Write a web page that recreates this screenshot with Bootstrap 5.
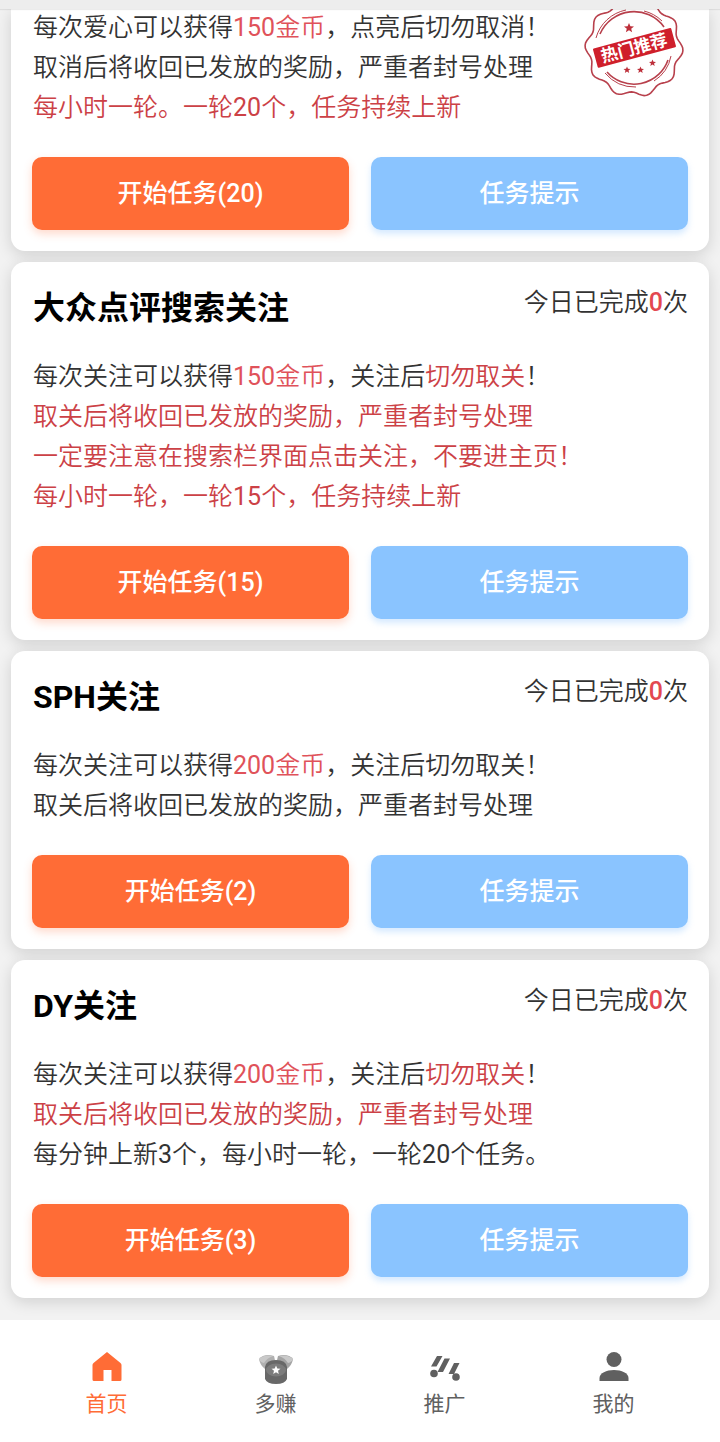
<!DOCTYPE html>
<html lang="zh-CN">
<head>
    <meta charset="UTF-8">
    <meta name="viewport" content="width=device-width, initial-scale=1">
    <title>任务列表</title>
    <link href="https://cdn.jsdelivr.net/npm/bootstrap@5.3.3/dist/css/bootstrap.min.css" rel="stylesheet">
    <style>
        body {
            font-family: Roboto, "Noto Sans CJK SC", sans-serif;
            font-size: 25px;
            line-height: 40px;
            font-weight: 350;
            color: #333;
            background: #f2f2f2;
            padding: 8px 11px 144px;
        }
        .top-strip {
            height: 9px;
            background: #ededed;
            box-shadow: 0 1px 1px rgba(0, 0, 0, .08);
        }
        .task-list { gap: 11px; }
        .task-card {
            border: 0;
            border-radius: 14px;
            padding: 21px;
            box-shadow: 0 4px 16px rgba(0, 0, 0, .14);
        }
        .task-card-cut {
            border-top-left-radius: 0;
            border-top-right-radius: 0;
            padding-top: 0;
        }
        .task-title {
            font-size: 32px;
            line-height: 50px;
            font-weight: 700;
            color: #000;
            margin-bottom: 24px;
            padding-left: 1px;
        }
        .task-text {
            margin-bottom: 29px;
            padding-left: 1px;
        }
        .num { font-weight: 400; }
        .coin { color: #e0525a; }
        .warn { color: #cc4146; }
        .done-num { color: #e34850; font-weight: 500; }
        .task-actions { gap: 22px; }
        .btn-task {
            --bs-btn-color: #fff;
            --bs-btn-hover-color: #fff;
            --bs-btn-active-color: #fff;
            flex: 1 1 0;
            border: 0;
            border-radius: 10px;
            padding: 16px 12px;
            font-size: 25px;
            line-height: 41px;
            font-weight: 500;
        }
        .btn-start {
            --bs-btn-bg: #ff6c36;
            --bs-btn-hover-bg: #f2602a;
            --bs-btn-active-bg: #e65a26;
            box-shadow: 0 4px 8px rgba(255, 108, 54, .25);
        }
        .btn-tip {
            --bs-btn-bg: #8ac4ff;
            --bs-btn-hover-bg: #78b8f8;
            --bs-btn-active-bg: #6bacf0;
            box-shadow: 0 4px 6px rgba(138, 196, 255, .35);
        }
        .hot-stamp {
            top: -13px;
            right: 22px;
            width: 106px;
            height: 106px;
        }
        .tab-bar {
            background: #fff;
            padding: 30px 22px 23px;
        }
        .tab-item {
            flex: 1 1 0;
            gap: 7px;
            font-size: 21px;
            line-height: 30px;
            font-weight: 400;
            color: #606060;
            text-decoration: none;
        }
        .tab-item svg { overflow: visible; }
        .tab-item.active { color: #ff6c36; }
    </style>
</head>
<body>
<div class="top-strip fixed-top"></div>

<main class="task-list d-flex flex-column">
    <section class="card task-card task-card-cut">
        <p class="task-text">
            每次爱心可以获得<span class="coin"><span class="num">150</span>金币</span>，点亮后切勿取消！<br>
            取消后将收回已发放的奖励，严重者封号处理<br>
            <span class="warn">每小时一轮。一轮<span class="num">20</span>个，任务持续上新</span>
        </p>
        <div class="task-actions d-flex">
            <button type="button" class="btn btn-task btn-start">开始任务(20)</button>
            <button type="button" class="btn btn-task btn-tip">任务提示</button>
        </div>
        <svg class="hot-stamp position-absolute" viewBox="-53 -53 106 106" role="img" aria-label="热门推荐">
            <g fill="none" stroke="#b8404c">
                <path id="stamp-edge" stroke-width="1.6"/>
                <path d="M-34-14A37 37 0 0 1 30-21M34 12A36 36 0 0 1-27 24" stroke-width="1.6"/>
                <path d="M-38-10A39 39 0 0 1-8-38M10-37A39 39 0 0 1 28-27M37 8A38 38 0 0 1 20 33M2 39A39 39 0 0 1-29 25" stroke-width="1"/>
            </g>
            <g fill="#bd2f3a">
                <path id="star" d="M0-5L1.4-1.7L5-1.5L2.2.7L3.1 4.3L0 2.3L-3.1 4.3L-2.2.7L-5-1.5L-1.4-1.7Z" transform="translate(-5 -20)"/>
                <use href="#star" transform="translate(-3.5 36) scale(.7)"/>
                <use href="#star" transform="translate(10 36) scale(.7)"/>
                <use href="#star" transform="translate(22 29) scale(.7)"/>
            </g>
            <g transform="rotate(-15)">
                <rect x="-40" y="-10" width="81" height="20" rx="1" fill="#cf1f2b"/>
                <text x="0" y="6" text-anchor="middle" font-size="17" font-weight="700" fill="#fff">热门推荐</text>
            </g>
        </svg>
    </section>

    <section class="card task-card">
        <div class="d-flex justify-content-between align-items-start">
            <h2 class="task-title">大众点评搜索关注</h2>
            <span>今日已完成<span class="done-num">0</span>次</span>
        </div>
        <p class="task-text">
            每次关注可以获得<span class="coin"><span class="num">150</span>金币</span>，关注后<span class="warn">切勿取关</span>！<br>
            <span class="warn">取关后将收回已发放的奖励，严重者封号处理<br>
            一定要注意在搜索栏界面点击关注，不要进主页！<br>
            每小时一轮，一轮<span class="num">15</span>个，任务持续上新</span>
        </p>
        <div class="task-actions d-flex">
            <button type="button" class="btn btn-task btn-start">开始任务(15)</button>
            <button type="button" class="btn btn-task btn-tip">任务提示</button>
        </div>
    </section>

    <section class="card task-card">
        <div class="d-flex justify-content-between align-items-start">
            <h2 class="task-title">SPH关注</h2>
            <span>今日已完成<span class="done-num">0</span>次</span>
        </div>
        <p class="task-text">
            每次关注可以获得<span class="coin"><span class="num">200</span>金币</span>，关注后切勿取关！<br>
            取关后将收回已发放的奖励，严重者封号处理
        </p>
        <div class="task-actions d-flex">
            <button type="button" class="btn btn-task btn-start">开始任务(2)</button>
            <button type="button" class="btn btn-task btn-tip">任务提示</button>
        </div>
    </section>

    <section class="card task-card">
        <div class="d-flex justify-content-between align-items-start">
            <h2 class="task-title">DY关注</h2>
            <span>今日已完成<span class="done-num">0</span>次</span>
        </div>
        <p class="task-text">
            每次关注可以获得<span class="coin"><span class="num">200</span>金币</span>，关注后<span class="warn">切勿取关</span>！<br>
            <span class="warn">取关后将收回已发放的奖励，严重者封号处理</span><br>
            每分钟上新<span class="num">3</span>个，每小时一轮，一轮<span class="num">20</span>个任务。
        </p>
        <div class="task-actions d-flex">
            <button type="button" class="btn btn-task btn-start">开始任务(3)</button>
            <button type="button" class="btn btn-task btn-tip">任务提示</button>
        </div>
    </section>
</main>

<!-- 底部导航 -->
<nav class="tab-bar fixed-bottom d-flex">
    <a href="#" class="tab-item active d-flex flex-column align-items-center" aria-current="page">
        <svg width="32" height="32" viewBox="0 0 32 32" fill="currentColor" aria-hidden="true">
            <path d="M16 2L29.500 13Q30.500 14 30.500 15V29.500Q30.500 31 29 31H20.500V20H12.500V31H3Q1.500 31 1.500 29.500V15Q1.500 14 2.500 13Z"/>
        </svg>
        <span>首页</span>
    </a>
    <a href="#" class="tab-item d-flex flex-column align-items-center">
        <svg width="36" height="32" viewBox="0 0 36 32" aria-hidden="true">
            <path d="M1 9C4 5 10 4 16 6Q18 11 17 17L7 19Q2 15 1 9Z" fill="#b0b0b0"/>
            <path d="M35 9C32 5 26 4 20 6Q18 11 19 17L29 19Q34 15 35 9Z" fill="#a4a4a4"/>
            <path d="M1 9Q6 4 15 6Q9 8 6 13Q2 12 1 9ZM35 9Q30 4 21 6Q27 8 30 13Q34 12 35 9Z" fill="#c9c9c9"/>
            <path d="M7 17Q8 10 18 10Q28 10 29 17V29Q27 34 18 34Q9 34 7 29Z" fill="#686868"/>
            <ellipse cx="18" cy="20" rx="10" ry="6.500" fill="#7c7c7c"/>
            <path d="M18 15.500L19.300 18.500L22.500 18.700L20 20.800L20.800 24L18 22.200L15.200 24L16 20.800L13.500 18.700L16.700 18.500Z" fill="#fff"/>
        </svg>
        <span>多赚</span>
    </a>
    <a href="#" class="tab-item d-flex flex-column align-items-center">
        <svg width="32" height="32" viewBox="0 0 32 32" fill="currentColor" aria-hidden="true">
            <path d="M8 6H13.500L7.500 16.500H2ZM15.500 8.500H21L14 22H8.500ZM25 13H30.500L25 24H19.500Z"/>
            <circle cx="5" cy="23.500" r="3.800"/>
            <circle cx="27" cy="27" r="3.800"/>
        </svg>
        <span>推广</span>
    </a>
    <a href="#" class="tab-item d-flex flex-column align-items-center">
        <svg width="32" height="32" viewBox="0 0 32 32" fill="currentColor" aria-hidden="true">
            <circle cx="16" cy="9.500" r="7.500"/>
            <path d="M1.500 31V28C1.500 23 8.500 20 16 20S30.500 23 30.500 28V31Z"/>
        </svg>
        <span>我的</span>
    </a>
</nav>

<script src="https://cdn.jsdelivr.net/npm/bootstrap@5.3.3/dist/js/bootstrap.bundle.min.js"></script>
<script>
    // 印章的波浪形外圈
    const points = [];
    for (let deg = 0; deg < 360; deg += 3) {
        const a = deg * Math.PI / 180;
        const r = 46.5 + 2.5 * Math.cos(10 * (a - 0.05));
        points.push(`${(r * Math.cos(a)).toFixed(1)} ${(r * Math.sin(a)).toFixed(1)}`);
    }
    document.getElementById('stamp-edge').setAttribute('d', 'M' + points.join('L') + 'Z');
</script>
</body>
</html>
